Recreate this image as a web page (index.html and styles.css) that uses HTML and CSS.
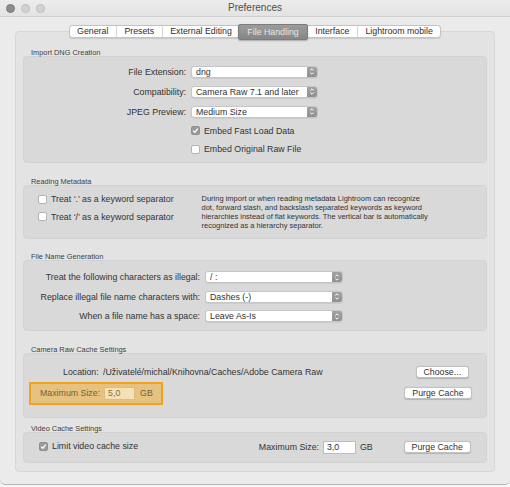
FILE: index.html
```html
<!DOCTYPE html>
<html>
<head>
<meta charset="utf-8">
<title>Preferences</title>
<link rel="stylesheet" href="styles.css">
</head>
<body>
<div class="window">
  <div class="titlebar">
    <div class="lights">
      <span class="light light-close"></span>
      <span class="light"></span>
      <span class="light"></span>
    </div>
    <div class="title">Preferences</div>
    <div></div>
  </div>

  <div class="tabs">
    <div class="tab">General</div>
    <div class="tab">Presets</div>
    <div class="tab">External Editing</div>
    <div class="tab tab-active">File Handling</div>
    <div class="tab">Interface</div>
    <div class="tab">Lightroom mobile</div>
  </div>

  <div class="panel">
    <div class="glabel">Import DNG Creation</div>
    <div class="group g-dng">
      <div class="frow">
        <span class="flabel dng-label">File Extension:</span>
        <div class="select dng-select"><span class="sval">dng</span><span class="stepper"><svg width="6" height="9" viewBox="0 0 6 9"><path d="M1.4 3.4 L3 1.8 L4.6 3.4 M1.4 5.6 L3 7.2 L4.6 5.6" fill="none" stroke="#fff" stroke-width="1"/></svg></span></div>
      </div>
      <div class="frow">
        <span class="flabel dng-label">Compatibility:</span>
        <div class="select dng-select"><span class="sval">Camera Raw 7.1 and later</span><span class="stepper"><svg width="6" height="9" viewBox="0 0 6 9"><path d="M1.4 3.4 L3 1.8 L4.6 3.4 M1.4 5.6 L3 7.2 L4.6 5.6" fill="none" stroke="#fff" stroke-width="1"/></svg></span></div>
      </div>
      <div class="frow">
        <span class="flabel dng-label">JPEG Preview:</span>
        <div class="select dng-select"><span class="sval">Medium Size</span><span class="stepper"><svg width="6" height="9" viewBox="0 0 6 9"><path d="M1.4 3.4 L3 1.8 L4.6 3.4 M1.4 5.6 L3 7.2 L4.6 5.6" fill="none" stroke="#fff" stroke-width="1"/></svg></span></div>
      </div>
      <div class="crow dng-crow">
        <span class="cb cb-on"><svg width="9" height="9" viewBox="0 0 9 9"><path d="M2.2 4.7 L3.8 6.3 L6.8 2.6" fill="none" stroke="#fff" stroke-width="1.3"/></svg></span>
        <span>Embed Fast Load Data</span>
      </div>
      <div class="crow dng-crow">
        <span class="cb"></span>
        <span>Embed Original Raw File</span>
      </div>
    </div>

    <div class="glabel gap15">Reading Metadata</div>
    <div class="group g-meta">
      <div class="meta-left">
        <div class="crow meta-crow"><span class="cb"></span><span>Treat ‘.’ as a keyword separator</span></div>
        <div class="crow meta-crow"><span class="cb"></span><span>Treat ‘/’ as a keyword separator</span></div>
      </div>
      <p class="desc">During import or when reading metadata Lightroom can recognize<br>dot, forward slash, and backslash separated keywords as keyword<br>hierarchies instead of flat keywords. The vertical bar is automatically<br>recognized as a hierarchy separator.</p>
    </div>

    <div class="glabel gap14">File Name Generation</div>
    <div class="group g-fn">
      <div class="frow fn-row">
        <span class="flabel fn-label">Treat the following characters as illegal:</span>
        <div class="select fn-select"><span class="sval">/ :</span><span class="stepper"><svg width="6" height="9" viewBox="0 0 6 9"><path d="M1.4 3.4 L3 1.8 L4.6 3.4 M1.4 5.6 L3 7.2 L4.6 5.6" fill="none" stroke="#fff" stroke-width="1"/></svg></span></div>
      </div>
      <div class="frow fn-row">
        <span class="flabel fn-label">Replace illegal file name characters with:</span>
        <div class="select fn-select"><span class="sval">Dashes (-)</span><span class="stepper"><svg width="6" height="9" viewBox="0 0 6 9"><path d="M1.4 3.4 L3 1.8 L4.6 3.4 M1.4 5.6 L3 7.2 L4.6 5.6" fill="none" stroke="#fff" stroke-width="1"/></svg></span></div>
      </div>
      <div class="frow fn-row">
        <span class="flabel fn-label">When a file name has a space:</span>
        <div class="select fn-select"><span class="sval">Leave As-Is</span><span class="stepper"><svg width="6" height="9" viewBox="0 0 6 9"><path d="M1.4 3.4 L3 1.8 L4.6 3.4 M1.4 5.6 L3 7.2 L4.6 5.6" fill="none" stroke="#fff" stroke-width="1"/></svg></span></div>
      </div>
    </div>

    <div class="glabel gap15">Camera Raw Cache Settings</div>
    <div class="group g-cr">
      <div class="cr-row1">
        <span class="loc-label">Location:</span>
        <span class="loc-path">/Uživatelé/michal/Knihovna/Caches/Adobe Camera Raw</span>
        <button class="btn btn-choose">Choose...</button>
      </div>
      <div class="cr-row2">
        <div class="highlight">
          <span>Maximum Size:</span>
          <span class="input input-hl">5,0</span>
          <span class="gb">GB</span>
        </div>
        <button class="btn btn-purge cr-purge">Purge Cache</button>
      </div>
    </div>

    <div class="glabel gap7">Video Cache Settings</div>
    <div class="group g-vid">
      <div class="crow vid-crow">
        <span class="cb cb-on"><svg width="9" height="9" viewBox="0 0 9 9"><path d="M2.2 4.7 L3.8 6.3 L6.8 2.6" fill="none" stroke="#fff" stroke-width="1.3"/></svg></span>
        <span>Limit video cache size</span>
      </div>
      <span class="vid-label">Maximum Size:</span>
      <span class="input input-vid">3,0</span>
      <span class="gb vid-gb">GB</span>
      <button class="btn btn-purge vid-purge">Purge Cache</button>
    </div>
  </div>
</div>
</body>
</html>
```

FILE: styles.css
```css
* { box-sizing: border-box; }

html, body {
  margin: 0;
  padding: 0;
}

body {
  background: #f6f6f6;
  font-family: "Liberation Sans", Arial, sans-serif;
  color: #333333;
  font-size: 8.8px;
}

.window {
  width: 510px;
  height: 485px;
  background: #ebebeb;
  border-bottom: 1px solid #b3b3b3;
  border-radius: 0 0 5px 5px;
  display: flex;
  flex-direction: column;
  overflow: hidden;
}

/* Title bar */
.titlebar {
  height: 17px;
  display: grid;
  grid-template-columns: 1fr auto 1fr;
  align-items: center;
  background: linear-gradient(#ececec, #e3e3e3);
  border-bottom: 1px solid #d0d0d0;
  flex: none;
}

.lights {
  display: flex;
  gap: 6px;
  padding-left: 6px;
  align-items: center;
}

.light {
  width: 9px;
  height: 9px;
  border-radius: 50%;
  background: #d2d2d2;
  border: 0.5px solid #bdbdbd;
}

.light-close {
  background: #8c8c8c;
  border-color: #7a7a7a;
}

.title {
  font-size: 10px;
  color: #4d4d4d;
  line-height: 16px;
}

/* Tabs */
.tabs {
  align-self: center;
  margin-top: 8px;
  height: 13px;
  display: flex;
  background: #fff;
  border: 1px solid #c4c4c4;
  border-radius: 3.5px;
  box-shadow: 0 0.5px 1px rgba(0,0,0,0.12);
  position: relative;
  z-index: 1;
  flex: none;
}

.tab {
  padding: 0 7.5px;
  line-height: 11px;
  font-size: 8.8px;
  color: #2e2e2e;
  border-left: 1px solid #d6d6d6;
  white-space: nowrap;
}

.tab:first-child {
  border-left: none;
}

.tab-active {
  margin: -2.5px 0 -2.5px -1px;
  padding: 0 8px;
  line-height: 14px;
  color: #e6e6e6;
  background: linear-gradient(#9c9c9c, #878787);
  border: 1px solid #7c7c7c;
  border-radius: 2px;
  box-shadow: 0 1px 1.5px rgba(0,0,0,0.25);
}

.tab-active + .tab {
  border-left: none;
}

/* Panel */
.panel {
  margin: -7px 15px 0;
  height: 441px;
  background: #e3e3e3;
  border: 1px solid #d7d7d7;
  border-radius: 4px;
  padding: 17px 7px 8px;
  flex: none;
}

.glabel {
  font-size: 7.4px;
  line-height: 7px;
  height: 7px;
  padding-left: 8px;
  color: #404040;
  white-space: nowrap;
}

.gap15 { margin-top: 15px; }
.gap14 { margin-top: 14px; }
.gap7 { margin-top: 7px; }

.group {
  background: #d9d9d9;
  border: 1px solid #d2d2d2;
  border-radius: 4px;
}

/* Form rows */
.frow {
  display: flex;
  align-items: center;
  height: 20px;
  gap: 5px;
}

.flabel {
  text-align: right;
  white-space: nowrap;
  flex: none;
}

.select {
  height: 12px;
  display: flex;
  background: #fff;
  border: 1px solid #c6c6c6;
  border-radius: 3px;
  box-shadow: 0 0.5px 0.5px rgba(0,0,0,0.12);
  flex: none;
  overflow: hidden;
}

.sval {
  flex: 1;
  padding-left: 4px;
  line-height: 10px;
  white-space: nowrap;
}

.stepper {
  width: 10px;
  background: linear-gradient(#a3a3a3, #8f8f8f);
  display: flex;
  align-items: center;
  justify-content: center;
}

.crow {
  display: flex;
  align-items: center;
  gap: 4px;
  white-space: nowrap;
}

.cb {
  width: 9px;
  height: 9px;
  background: #fff;
  border: 1px solid #b4b4b4;
  border-radius: 2px;
  flex: none;
  display: flex;
  align-items: center;
  justify-content: center;
}

.cb svg {
  display: block;
  margin: -1px;
}

.cb-on {
  background: #9b9b9b;
  border-color: #8e8e8e;
}

/* Import DNG */
.g-dng {
  padding: 4.5px 0 3.5px 0;
}

.dng-label { width: 162px; }
.dng-select { width: 127px; }

.dng-crow {
  height: 18.5px;
  padding-left: 167px;
}

/* Reading metadata */
.g-meta {
  display: flex;
  padding: 7.5px 0 8.5px 14px;
}

.meta-left {
  width: 163.5px;
  display: flex;
  flex-direction: column;
  gap: 6.5px;
  flex: none;
}

.meta-crow {
  height: 11px;
}

.desc {
  margin: 0;
  font-size: 7.5px;
  line-height: 9px;
  color: #333333;
  white-space: nowrap;
}

/* File name generation */
.g-fn {
  padding: 6.25px 0 4.25px 0;
}

.fn-row { height: 19.5px; }
.fn-label { width: 176px; }
.fn-select { width: 138px; }

/* Buttons & inputs */
.btn {
  font-family: "Liberation Sans", Arial, sans-serif;
  font-size: 8.8px;
  color: #333333;
  background: #fff;
  border: 1px solid #c2c2c2;
  border-radius: 3px;
  box-shadow: 0 0.5px 1px rgba(0,0,0,0.18);
  height: 12px;
  padding: 0;
  line-height: 10px;
  flex: none;
}

.btn-choose { width: 53.5px; }
.btn-purge { width: 67.5px; }

.input {
  height: 13.3px;
  line-height: 11.3px;
  padding-left: 3px;
  flex: none;
  border: 1px solid #bdbdbd;
  background: #fff;
}

/* Camera raw cache */
.g-cr {
  padding: 11.5px 0 12px 0;
}

.cr-row1 {
  display: flex;
  align-items: center;
  height: 12px;
  padding-left: 39px;
  padding-right: 17px;
}

.loc-path {
  margin-left: 4.3px;
  flex: 1;
  white-space: nowrap;
}

.cr-row2 {
  display: flex;
  align-items: center;
  justify-content: space-between;
  margin-top: 4.2px;
  padding-left: 5.3px;
  padding-right: 14.3px;
}

.highlight {
  display: flex;
  align-items: center;
  height: 23.3px;
  width: 134px;
  padding-left: 8.7px;
  background: #e5c27f;
  border: 2px solid #f3a21a;
  color: #7b5f33;
  white-space: nowrap;
}

.input-hl {
  width: 31px;
  margin-left: 4px;
  background: #f5e1b6;
  border-color: #dbbd83;
  color: #8a6b3c;
}

.gb {
  margin-left: 5px;
}

/* Video cache */
.g-vid {
  display: flex;
  align-items: center;
  padding: 8px 15px 8px 15px;
  height: 31px;
}

.vid-crow {
  flex: 1;
  height: 12px;
  margin-top: -2px;
}

.vid-label {
  white-space: nowrap;
}

.input-vid {
  width: 33px;
  margin-left: 4px;
}

.vid-gb {
  margin-left: 4px;
  margin-right: 30.8px;
}
```
